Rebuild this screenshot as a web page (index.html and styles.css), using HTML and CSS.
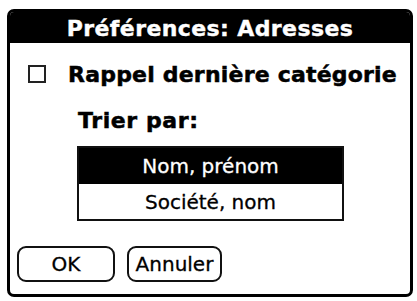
FILE: index.html
```html
<!DOCTYPE html>
<html lang="fr">
<head>
<meta charset="utf-8">
<link rel="stylesheet" href="styles.css">
</head>
<body>
<div class="dialog">
  <div class="title">Préférences: Adresses</div>
  <div class="content">
    <div class="check-row">
      <span class="checkbox"></span>
      <span class="check-label">Rappel dernière catégorie</span>
    </div>
    <div class="sort-label">Trier par:</div>
    <div class="list">
      <div class="item selected">Nom, prénom</div>
      <div class="item">Société, nom</div>
    </div>
    <div class="buttons">
      <div class="btn btn-ok">OK</div>
      <div class="btn btn-cancel">Annuler</div>
    </div>
  </div>
</div>
</body>
</html>
```
FILE: styles.css
```css
html, body {
  margin: 0;
  padding: 0;
  background: #fff;
}
body {
  padding: 9px 0 0 7px;
  font-family: "DejaVu Sans", "Liberation Sans", sans-serif;
  color: #000;
}
.dialog {
  box-sizing: border-box;
  width: 406px;
  height: 288px;
  border: 3px solid #000;
  border-radius: 7px;
  display: flex;
  flex-direction: column;
  overflow: hidden;
}
.title {
  height: 31px;
  background: #000;
  color: #fff;
  font-weight: bold;
  font-size: 22px;
  line-height: 33px;
  text-align: center;
  letter-spacing: 0.4px;
  -webkit-text-stroke: 0.4px #fff;
}
.content {
  flex: 1;
  display: flex;
  flex-direction: column;
}
.check-row {
  display: flex;
  align-items: center;
  height: 24px;
  margin-top: 19px;
  padding-left: 18px;
}
.checkbox {
  box-sizing: border-box;
  width: 18px;
  height: 18px;
  border: 2px solid #222;
}
.check-label {
  margin-left: 22px;
  font-weight: bold;
  font-size: 22px;
  letter-spacing: 0.2px;
  -webkit-text-stroke: 0.5px #000;
}
.sort-label {
  margin-top: 22px;
  margin-left: 68px;
  font-weight: bold;
  font-size: 22px;
  line-height: 26px;
  letter-spacing: 0.6px;
  -webkit-text-stroke: 0.5px #000;
}
.list {
  box-sizing: border-box;
  margin-top: 12px;
  margin-left: 67px;
  width: 267px;
  height: 75px;
  border: 2px solid #111;
  display: flex;
  flex-direction: column;
}
.item {
  flex: 1;
  display: flex;
  align-items: center;
  justify-content: center;
  font-size: 20px;
  -webkit-text-stroke: 0.3px #000;
}
.item.selected {
  background: #000;
  color: #fff;
  flex: 0 0 36px;
  -webkit-text-stroke: 0.3px #fff;
}
.buttons {
  display: flex;
  gap: 12px;
  margin-top: 25px;
  margin-left: 7px;
}
.btn {
  box-sizing: border-box;
  height: 36px;
  border: 2px solid #111;
  border-radius: 9px;
  display: flex;
  align-items: center;
  justify-content: center;
  font-size: 20px;
  -webkit-text-stroke: 0.3px #000;
}
.btn-ok { width: 98px; }
.btn-cancel { width: 95px; }
```
